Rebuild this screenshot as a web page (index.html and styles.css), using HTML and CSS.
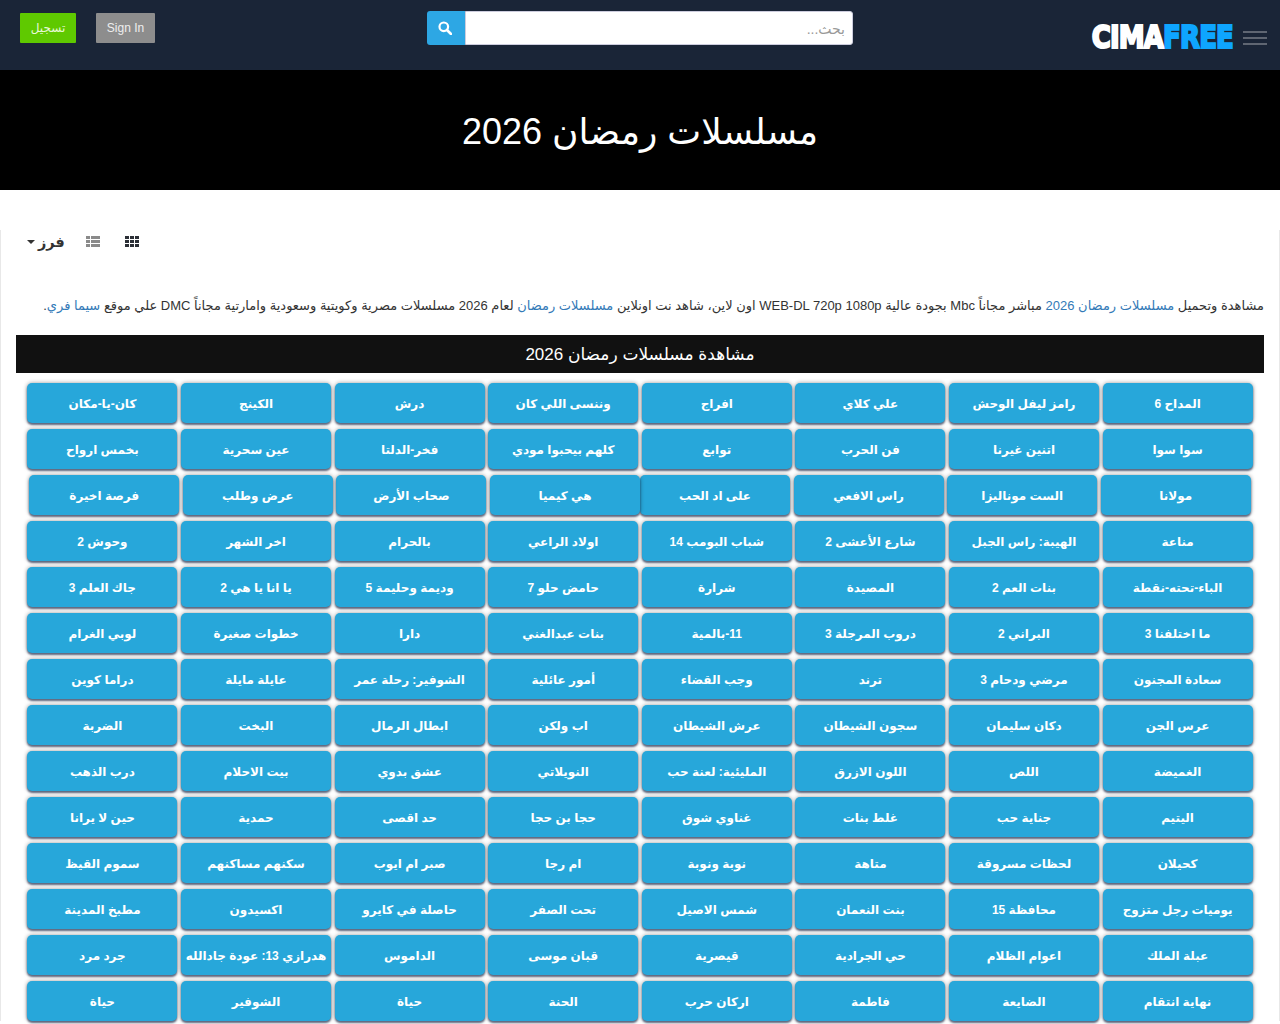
FILE: index.html
```html
<!DOCTYPE html>
<html lang="ar" dir="rtl">
<head>
<meta charset="utf-8">
<title>مسلسلات رمضان 2026</title>
<link rel="stylesheet" href="styles.css">
</head>
<body>
<header class="topbar">
  <div class="brand">
    <div class="burger" aria-hidden="true"><span></span><span></span><span></span></div>
    <a class="logo" dir="ltr"><span class="logo-a">CIMA</span><span class="logo-b">FREE</span></a>
  </div>
  <form class="search">
    <input class="search-input" type="text" placeholder="بحث...">
    <button class="search-btn" type="button" aria-label="بحث">
      <svg width="14" height="14" viewBox="0 0 14 14"><circle cx="5.8" cy="5.8" r="4.3" fill="none" stroke="#fff" stroke-width="2.2"/><path d="M9 9l4 4" stroke="#fff" stroke-width="2.6" stroke-linecap="round"/></svg>
    </button>
  </form>
  <div class="auth">
    <a class="btn btn-gray">Sign In</a>
    <a class="btn btn-green">تسجيل</a>
  </div>
</header>
<section class="hero"><h1>مسلسلات رمضان 2026</h1></section>
<main class="content">
  <div class="toolbar">
    <div class="tool-grid" aria-hidden="true"><i></i><i></i><i></i><i></i><i></i><i></i><i></i><i></i><i></i></div>
    <div class="tool-list" aria-hidden="true"><i></i><i></i><i></i><i></i><i></i><i></i></div>
    <div class="sort">فرز<span class="caret"></span></div>
  </div>
  <p class="desc">مشاهدة وتحميل <a>مسلسلات رمضان 2026</a> مباشر مجاناً Mbc بجودة عالية WEB-DL 720p 1080p اون لاين، شاهد نت اونلاين <a>مسلسلات رمضان</a> لعام 2026 مسلسلات مصرية وكويتية وسعودية وامارتية مجاناً DMC علي موقع <a>سيما فري</a>.</p>
  <h2 class="section-title">مشاهدة مسلسلات رمضان 2026</h2>
  <div class="row"><a class="tag">المداح 6</a><a class="tag">رامز ليفل الوحش</a><a class="tag">علي كلاي</a><a class="tag">افراج</a><a class="tag">وننسى اللي كان</a><a class="tag">درش</a><a class="tag">الكينج</a><a class="tag">كان-يا-مكان</a></div>
  <div class="row"><a class="tag">سوا سوا</a><a class="tag">اتنين غيرنا</a><a class="tag">فن الحرب</a><a class="tag">توابع</a><a class="tag">كلهم بيحبوا مودي</a><a class="tag">فخر-الدلتا</a><a class="tag">عين سحرية</a><a class="tag">بخمس ارواح</a></div>
  <div class="row"><a class="tag">مولانا</a><a class="tag">الست موناليزا</a><a class="tag">راس الافعي</a><a class="tag tag-join">على اد الحب</a><a class="tag">هي كيميا</a><a class="tag">صحاب الأرض</a><a class="tag">عرض وطلب</a><a class="tag">فرصة اخيرة</a></div>
  <div class="row"><a class="tag">مناعة</a><a class="tag">الهيبة: راس الجبل</a><a class="tag">شارع الأعشى 2</a><a class="tag">شباب البومب 14</a><a class="tag">اولاد الراعي</a><a class="tag">بالحرام</a><a class="tag">اخر الشهر</a><a class="tag">وحوش 2</a></div>
  <div class="row"><a class="tag">الباء-تحته-نقطة</a><a class="tag">بنات العم 2</a><a class="tag">المصيدة</a><a class="tag">شرارة</a><a class="tag">حامض حلو 7</a><a class="tag">وديمة وحليمة 5</a><a class="tag">يا انا يا هي 2</a><a class="tag">جاك العلم 3</a></div>
  <div class="row"><a class="tag">ما اختلفنا 3</a><a class="tag">البراني 2</a><a class="tag">دروب المرجلة 3</a><a class="tag">11-بالمية</a><a class="tag">بنات عبدالغني</a><a class="tag">دارا</a><a class="tag">خطوات صغيرة</a><a class="tag">لوبي الغرام</a></div>
  <div class="row"><a class="tag">سعادة المجنون</a><a class="tag">مرضي ودحام 3</a><a class="tag">ترند</a><a class="tag">وجب القضاء</a><a class="tag">أمور عائلية</a><a class="tag">الشوفير: رحلة عمر</a><a class="tag">عايلة مايلة</a><a class="tag">دراما كوين</a></div>
  <div class="row"><a class="tag">عرس الجن</a><a class="tag">دكان سليمان</a><a class="tag">سجون الشيطان</a><a class="tag">عرش الشيطان</a><a class="tag">اب ولكن</a><a class="tag">ابطال الرمال</a><a class="tag">البخت</a><a class="tag">الضربة</a></div>
  <div class="row"><a class="tag">الغميضة</a><a class="tag">اللص</a><a class="tag">اللون الازرق</a><a class="tag">المليئية: لعنة حب</a><a class="tag">النويلاتي</a><a class="tag">عشق بدوي</a><a class="tag">بيت الاحلام</a><a class="tag">درب الذهب</a></div>
  <div class="row"><a class="tag">اليتيم</a><a class="tag">جناية حب</a><a class="tag">غلط بنات</a><a class="tag">غناوي شوق</a><a class="tag">حجا بن حجا</a><a class="tag">حد اقصى</a><a class="tag">حمدية</a><a class="tag">حين لا يرانا</a></div>
  <div class="row"><a class="tag">كحيلان</a><a class="tag">لحظات مسروقة</a><a class="tag">متاهة</a><a class="tag">نوبة ونوبة</a><a class="tag">ام رجا</a><a class="tag">صبر ام ايوب</a><a class="tag">سكنهم مساكنهم</a><a class="tag">سموم القيظ</a></div>
  <div class="row"><a class="tag">يوميات رجل متزوج</a><a class="tag">محافظة 15</a><a class="tag">بنت النعمان</a><a class="tag">شمس الاصيل</a><a class="tag">تحت الصفر</a><a class="tag">حاصلة في كايرو</a><a class="tag">اكسيدون</a><a class="tag">مطبخ المدينة</a></div>
  <div class="row"><a class="tag">عبلة الملك</a><a class="tag">اعوام الظلام</a><a class="tag">حي الجرادية</a><a class="tag">قيصرية</a><a class="tag">قبان موسى</a><a class="tag">الداموس</a><a class="tag">هدرازي 13: عودة جادالله</a><a class="tag">جرد مرد</a></div>
  <div class="row"><a class="tag">نهاية انتقام</a><a class="tag">الضايعة</a><a class="tag">فاطمة</a><a class="tag">اركان حرب</a><a class="tag">الحنة</a><a class="tag">حياة</a><a class="tag">الشوفير</a><a class="tag">حياة</a></div>
</main>
</body>
</html>
```
FILE: styles.css
```css
* { box-sizing: border-box; }
html, body { margin: 0; padding: 0; }
body {
  background: #fff;
  color: #333;
  font-family: "Liberation Sans", "DejaVu Sans", sans-serif;
  font-size: 14px;
  overflow: hidden;
  height: 1024px;
}
a { color: inherit; text-decoration: none; }

.topbar {
  height: 70px;
  background: #1a2537;
  display: grid;
  grid-template-columns: 1fr 426px 1fr;
  align-items: start;
}
.brand {
  display: flex;
  align-items: center;
  gap: 10px;
  padding: 22px 13px 0 0;
}
.burger { width: 24px; display: flex; flex-direction: column; gap: 4px; margin-top: 1px; }
.burger span { display: block; height: 2px; background: #5f6672; }
.logo {
  display: inline-block;
  font-family: "DejaVu Sans", sans-serif;
  font-weight: 700;
  font-size: 26px;
  line-height: 30px;
  letter-spacing: -0.85px;
  -webkit-text-stroke: 1.8px currentColor;
  transform: scaleY(1.2);
}
.logo-a { color: #fff; }
.logo-b { color: #0ea5ff; }

.search { display: flex; height: 34px; margin-top: 11px; }
.search-input {
  flex: 1;
  min-width: 0;
  border: 1px solid #ccd;
  border-radius: 0 3px 3px 0;
  padding: 2px 7px 0;
  background: #fff;
  font: 14px "Liberation Sans", "DejaVu Sans", sans-serif;
  outline: none;
}
.search-input::placeholder { color: #999; }
.search-btn {
  width: 38px;
  background: #2da7e4;
  border: 0;
  border-radius: 3px 0 0 3px;
  display: flex;
  align-items: center;
  justify-content: center;
  padding: 0 2px 0 0;
}

.auth {
  display: flex;
  justify-content: flex-end;
  gap: 20px;
  padding: 13px 0 0 20px;
  direction: rtl;
}
.btn {
  height: 30px;
  line-height: 30px;
  font-size: 12px;
  text-align: center;
  border-radius: 1px;
}
.btn-green { width: 56px; background: #5fc900; color: #e8f8d8; }
.btn-gray { width: 59px; background: #8d8d8d; color: #eee; }

.hero {
  height: 120px;
  background: #000;
  display: flex;
  align-items: center;
  justify-content: center;
  padding-top: 4px;
}
.hero h1 {
  margin: 0;
  color: #fff;
  font-size: 36px;
  font-weight: 400;
  line-height: 40px;
}

.content {
  border-left: 1px solid #e8e8e8;
  border-right: 1px solid #e8e8e8;
  padding: 0 15px;
}
.toolbar {
  height: 24px;
  margin-top: 40px;
  display: flex;
  justify-content: flex-end;
  align-items: center;
  direction: ltr;
  flex-direction: row-reverse;
  gap: 21px;
  padding-left: 11px;
}
.tool-grid {
  display: grid;
  grid-template-columns: repeat(3, 4px);
  grid-auto-rows: 3px;
  gap: 1px;
  margin: 0 0 2px 4px;
}
.tool-grid i { background: #2b2f36; }
.tool-list {
  display: grid;
  grid-template-columns: 4px 9px;
  grid-auto-rows: 3px;
  gap: 1px;
  margin-bottom: 2px;
}
.tool-list i { background: #8a8a8a; }
.sort {
  display: flex;
  flex-direction: row;
  align-items: center;
  gap: 3px;
  direction: rtl;
  font-weight: 700;
  font-size: 14.5px;
  color: #333;
}
.caret {
  width: 0;
  height: 0;
  border-top: 4px solid #333;
  border-left: 4px solid transparent;
  border-right: 4px solid transparent;
}

.desc {
  margin: 42px 0 19px;
  height: 20px;
  line-height: 20px;
  font-size: 13px;
  white-space: nowrap;
}
.desc a { color: #337ab7; }

.section-title {
  margin: 0 0 10px;
  height: 38px;
  line-height: 40px;
  background: #111;
  color: #fff;
  text-align: center;
  font-size: 17px;
  font-weight: 400;
}

.row {
  display: flex;
  justify-content: center;
  gap: 3.6px;
  height: 40px;
  margin-bottom: 6px;
}
.tag {
  flex: 0 0 150px;
  height: 40px;
  line-height: 42px;
  background: #27a7da;
  color: #fff;
  border-radius: 5px;
  text-align: center;
  font-family: "Liberation Sans", "DejaVu Sans", sans-serif;
  font-size: 12px;
  font-weight: 700;
  white-space: nowrap;
  overflow: hidden;
  box-shadow: 0 2px 2px rgba(30, 45, 80, 0.65), 0 0 4px rgba(0, 0, 0, 0.4);
}
.tag-join { margin-left: -3.6px; }
```
